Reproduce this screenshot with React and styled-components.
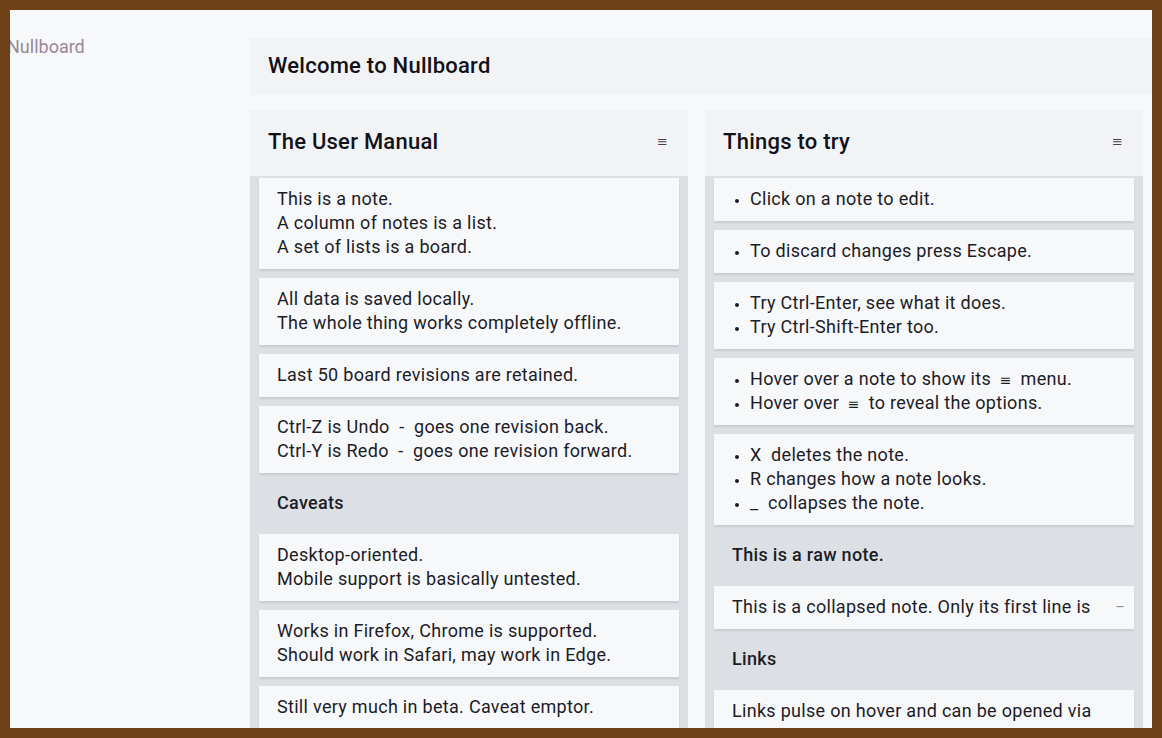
import styled, { createGlobalStyle } from "styled-components";

const GlobalStyle = createGlobalStyle`
    html, body {
        margin: 0;
        padding: 0;
        background: #f7f8fa;
        overflow: hidden;
    }
    body {
        font-family: Roboto, "Noto Sans", sans-serif;
        color: #1c1c26;
    }
`

function App() {
    return (
        <>
            <GlobalStyle />
            <Page>
                <Sidebar>
                    <Logo>Nullboard</Logo>
                </Sidebar>
                <Board>
                    <BoardTitle>Welcome to Nullboard</BoardTitle>
                    <Lists>
                        <List title="The User Manual" notes={manual} />
                        <List title="Things to try" notes={things} />
                    </Lists>
                </Board>
            </Page>
            <Frame />
        </>
    )
}

export default App

function List({ title, notes }) {
    return (
        <ListWrap>
            <ListHead>
                <ListTitle>{title}</ListTitle>
                <Menu>≡</Menu>
            </ListHead>
            <ListBody>
                {notes.map((n, i) => <Note key={i} {...n} />)}
            </ListBody>
        </ListWrap>
    )
}

function Note({ lines, raw, bullets, collapsed }) {
    return (
        <NoteBox $raw={raw} $collapsed={collapsed}>
            {bullets ? (
                <Bullets>
                    {lines.map((l, i) => <li key={i}>{l}</li>)}
                </Bullets>
            ) : (
                lines.map((l, i) => <Line key={i}>{l}</Line>)
            )}
            {collapsed && <Collapse>–</Collapse>}
        </NoteBox>
    )
}

const Frame = styled.div`
    position: fixed;
    inset: 0;
    border: 10px solid #6e4216;
    pointer-events: none;
`
const Page = styled.div`
    display: grid;
    grid-template-columns: 250px 1fr;
    height: 100vh;
`
const Sidebar = styled.div`
    padding: 36px 0 0 7px;
`
const Logo = styled.div`
    font-size: 18px;
    line-height: 22px;
    color: #9a8696;
`
const Board = styled.div`
    padding-top: 38px;
    display: flex;
    flex-direction: column;
`
const BoardTitle = styled.div`
    height: 57px;
    box-sizing: border-box;
    display: flex;
    align-items: center;
    padding: 0 0 3px 18px;
    background: #f2f3f5;
    font-size: 22px;
    font-weight: 500;
    letter-spacing: 0.25px;
    color: #111118;
`
const Lists = styled.div`
    margin-top: 15px;
    display: flex;
    gap: 17px;
    align-items: flex-start;
`
const ListWrap = styled.div`
    width: 438px;
    display: flex;
    flex-direction: column;
`
const ListHead = styled.div`
    height: 66px;
    box-sizing: border-box;
    display: flex;
    align-items: center;
    justify-content: space-between;
    padding: 0 20px 4px 18px;
    background: #f2f3f5;
`
const ListTitle = styled.div`
    font-size: 22px;
    font-weight: 500;
    letter-spacing: 0.25px;
    color: #111118;
`
const Menu = styled.span`
    font-family: "DejaVu Sans", sans-serif;
    font-size: 13px;
    color: #4c3a4e;
`
const ListBody = styled.div`
    background: #dcdfe3;
    padding: 2px 9px 9px;
    display: flex;
    flex-direction: column;
    gap: 9px;
    min-height: 600px;
`
const NoteBox = styled.div`
    position: relative;
    padding: 9px ${p => p.$collapsed ? '40px' : '18px'} 10px 18px;
    background: ${p => p.$raw ? 'transparent' : '#f7f8fa'};
    box-shadow: ${p => p.$raw ? 'none' : '0 2px 2px rgba(0, 0, 0, 0.09)'};
    font-size: 18px;
    letter-spacing: 0.3px;
    line-height: 24px;
    font-weight: ${p => p.$raw ? 500 : 400};
    white-space: ${p => p.$collapsed ? 'nowrap' : 'normal'};
    overflow: hidden;
`
const Line = styled.div`
    white-space: pre;
`
const Bullets = styled.ul`
    margin: 0;
    padding-left: 18px;
    li::marker {
        font-size: 13px;
    }
`
const Glyph = styled.span`
    font-family: "DejaVu Sans", sans-serif;
    font-size: 14px;
    line-height: 0;
    padding: 0 4px;
`
const Collapse = styled.span`
    position: absolute;
    right: 9px;
    top: 9px;
    color: #8a8d95;
    font-size: 14px;
`

const manual = [
    { lines: ['This is a note.', 'A column of notes is a list.', 'A set of lists is a board.'] },
    { lines: ['All data is saved locally.', 'The whole thing works completely offline.'] },
    { lines: ['Last 50 board revisions are retained.'] },
    { lines: ['Ctrl-Z is Undo  -  goes one revision back.', 'Ctrl-Y is Redo  -  goes one revision forward.'] },
    { raw: true, lines: ['Caveats'] },
    { lines: ['Desktop-oriented.', 'Mobile support is basically untested.'] },
    { lines: ['Works in Firefox, Chrome is supported.', 'Should work in Safari, may work in Edge.'] },
    { lines: ['Still very much in beta. Caveat emptor.'] },
]

const things = [
    { bullets: true, lines: ['Click on a note to edit.'] },
    { bullets: true, lines: ['To discard changes press Escape.'] },
    { bullets: true, lines: ['Try Ctrl-Enter, see what it does.', 'Try Ctrl-Shift-Enter too.'] },
    { bullets: true, lines: [<>Hover over a note to show its <Glyph>≡</Glyph> menu.</>, <>Hover over <Glyph>≡</Glyph> to reveal the options.</>] },
    { bullets: true, lines: [<>X&nbsp; deletes the note.</>, 'R changes how a note looks.', <>_&nbsp; collapses the note.</>] },
    { raw: true, lines: ['This is a raw note.'] },
    { collapsed: true, lines: ['This is a collapsed note. Only its first line is'] },
    { raw: true, lines: ['Links'] },
    { lines: ['Links pulse on hover and can be opened via'] },
]
